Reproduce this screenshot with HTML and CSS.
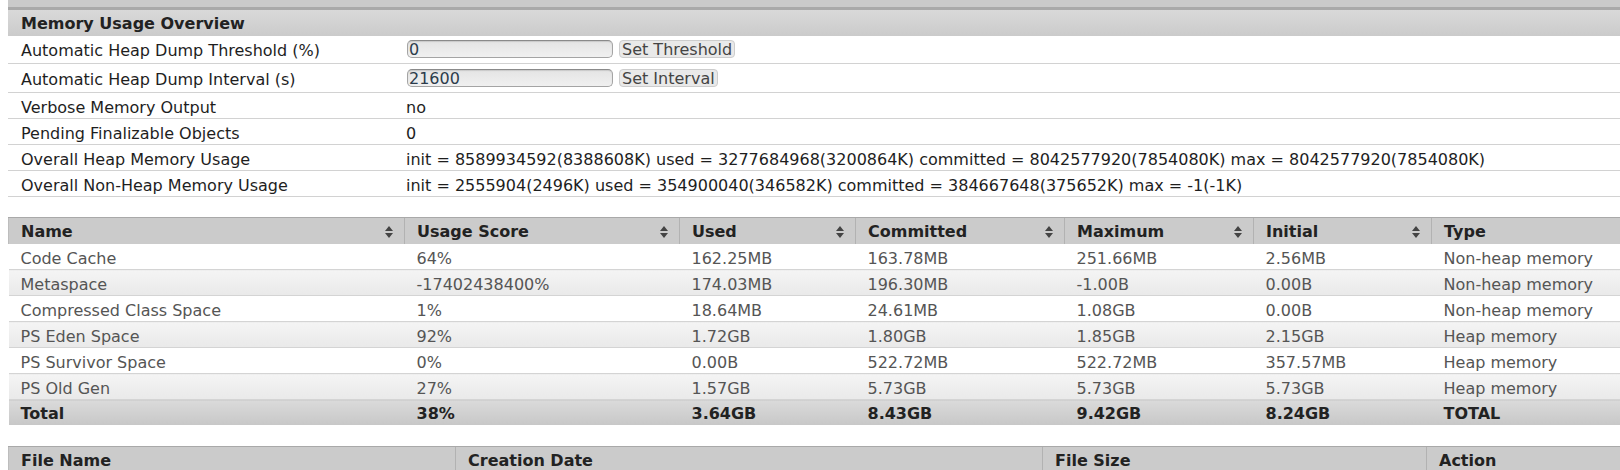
FILE: index.html
```html
<!DOCTYPE html>
<html>
<head>
<meta charset="utf-8">
<title>Memory</title>
<link rel="stylesheet" href="styles.css">
</head>
<body>
<div class="topbar"></div>
<table class="overview">
  <colgroup><col class="c-label"><col></colgroup>
  <thead><tr><th colspan="2">Memory Usage Overview</th></tr></thead>
  <tbody>
    <tr class="input-row">
      <td class="lbl">Automatic Heap Dump Threshold (%)</td>
      <td class="val"><input class="field" type="text" value="0"><button class="btn">Set Threshold</button></td>
    </tr>
    <tr class="input-row tall">
      <td class="lbl">Automatic Heap Dump Interval (s)</td>
      <td class="val"><input class="field" type="text" value="21600"><button class="btn">Set Interval</button></td>
    </tr>
    <tr><td>Verbose Memory Output</td><td>no</td></tr>
    <tr><td>Pending Finalizable Objects</td><td>0</td></tr>
    <tr><td>Overall Heap Memory Usage</td><td>init = 8589934592(8388608K) used = 3277684968(3200864K) committed = 8042577920(7854080K) max = 8042577920(7854080K)</td></tr>
    <tr><td>Overall Non-Heap Memory Usage</td><td>init = 2555904(2496K) used = 354900040(346582K) committed = 384667648(375652K) max = -1(-1K)</td></tr>
  </tbody>
</table>

<table class="grid pools">
  <colgroup>
    <col class="p1"><col class="p2"><col class="p3"><col class="p4"><col class="p5"><col class="p6"><col>
  </colgroup>
  <thead>
    <tr>
      <th><div class="hcell"><span>Name</span><svg class="sort" viewBox="0 0 8 12" width="8" height="12"><path d="M4 0L8 5H0Z M0 7H8L4 12Z"/></svg></div></th>
      <th><div class="hcell"><span>Usage Score</span><svg class="sort" viewBox="0 0 8 12" width="8" height="12"><path d="M4 0L8 5H0Z M0 7H8L4 12Z"/></svg></div></th>
      <th><div class="hcell"><span>Used</span><svg class="sort" viewBox="0 0 8 12" width="8" height="12"><path d="M4 0L8 5H0Z M0 7H8L4 12Z"/></svg></div></th>
      <th><div class="hcell"><span>Committed</span><svg class="sort" viewBox="0 0 8 12" width="8" height="12"><path d="M4 0L8 5H0Z M0 7H8L4 12Z"/></svg></div></th>
      <th><div class="hcell"><span>Maximum</span><svg class="sort" viewBox="0 0 8 12" width="8" height="12"><path d="M4 0L8 5H0Z M0 7H8L4 12Z"/></svg></div></th>
      <th><div class="hcell"><span>Initial</span><svg class="sort" viewBox="0 0 8 12" width="8" height="12"><path d="M4 0L8 5H0Z M0 7H8L4 12Z"/></svg></div></th>
      <th><div class="hcell"><span>Type</span></div></th>
    </tr>
  </thead>
  <tbody>
    <tr><td>Code Cache</td><td>64%</td><td>162.25MB</td><td>163.78MB</td><td>251.66MB</td><td>2.56MB</td><td>Non-heap memory</td></tr>
    <tr><td>Metaspace</td><td>-17402438400%</td><td>174.03MB</td><td>196.30MB</td><td>-1.00B</td><td>0.00B</td><td>Non-heap memory</td></tr>
    <tr><td>Compressed Class Space</td><td>1%</td><td>18.64MB</td><td>24.61MB</td><td>1.08GB</td><td>0.00B</td><td>Non-heap memory</td></tr>
    <tr><td>PS Eden Space</td><td>92%</td><td>1.72GB</td><td>1.80GB</td><td>1.85GB</td><td>2.15GB</td><td>Heap memory</td></tr>
    <tr><td>PS Survivor Space</td><td>0%</td><td>0.00B</td><td>522.72MB</td><td>522.72MB</td><td>357.57MB</td><td>Heap memory</td></tr>
    <tr><td>PS Old Gen</td><td>27%</td><td>1.57GB</td><td>5.73GB</td><td>5.73GB</td><td>5.73GB</td><td>Heap memory</td></tr>
  </tbody>
  <tfoot>
    <tr><td>Total</td><td>38%</td><td>3.64GB</td><td>8.43GB</td><td>9.42GB</td><td>8.24GB</td><td>TOTAL</td></tr>
  </tfoot>
</table>

<table class="grid files">
  <colgroup><col class="f1"><col class="f2"><col class="f3"><col></colgroup>
  <thead>
    <tr><th>File Name</th><th>Creation Date</th><th>File Size</th><th>Action</th></tr>
  </thead>
</table>
</body>
</html>
```

FILE: styles.css
```css
html { background: #fff; }
body {
  margin: 0 0 0 8px;
  font-family: "DejaVu Sans", Verdana, sans-serif;
  font-size: 16px;
  color: #222;
  background: #fff;
}

.topbar {
  height: 7px;
  background: #cacaca;
  border-bottom: 3px solid #a9a9a9;
}

table {
  border-collapse: collapse;
  width: 100%;
  table-layout: fixed;
}

/* overview */
.c-label { width: 382px; }
.overview th {
  height: 26px;
  padding: 0 13px;
  text-align: left;
  font-weight: bold;
  line-height: 19px;
  background: linear-gradient(#d9d9d9, #cbcbcb);
  color: #222;
}
.overview td {
  padding: 5px 12px 1px 13px;
  line-height: 19px;
  border-bottom: 1px solid #d2d2d2;
  white-space: nowrap;
  color: #1e1e1e;
}
.overview td + td { padding-left: 16px; }
.overview .input-row td.lbl {
  padding-top: 5px;
  padding-bottom: 3px;
  vertical-align: middle;
}
.overview .input-row.tall td.lbl { padding-top: 6px; padding-bottom: 3px; }
.overview .input-row td.val {
  vertical-align: top;
  padding-top: 4px;
  padding-bottom: 3px;
  padding-left: 12px;
}
.overview .input-row.tall td.val { padding-top: 5px; }

.field {
  display: inline-block;
  vertical-align: top;
  box-sizing: border-box;
  width: 206px;
  height: 18px;
  margin: 0 0 0 5px;
  padding: 0 1px;
  border: 1px solid #a4a4a4;
  border-top-color: #8a8a8a;
  border-radius: 5px;
  background: linear-gradient(#e4e4e4, #f0f0f0);
  font-family: "DejaVu Sans", Verdana, sans-serif;
  font-size: 16px;
  line-height: 16px;
  color: #2c3c4c;
  box-shadow: inset 0 1px 1px rgba(0,0,0,0.12);
}
.btn {
  display: inline-block;
  vertical-align: top;
  box-sizing: border-box;
  height: 18px;
  margin: 0 0 0 6px;
  padding: 0 2px;
  border: 1px solid #cdcdcd;
  border-radius: 4px;
  background: #e9e9e9;
  font-family: "DejaVu Sans", Verdana, sans-serif;
  font-size: 16px;
  line-height: 15px;
  color: #444;
}

/* data grids */
.grid th {
  padding: 4px 11px 3px 12px;
  line-height: 19px;
  text-align: left;
  font-weight: bold;
  color: #222;
  background: #cbcbcb;
  border-top: 1px solid #a9a9a9;
  border-left: 1px solid #b2b2b2;
  white-space: nowrap;
}
.grid th:first-child { border-left-color: #bdbdbd; }
.hcell {
  display: flex;
  align-items: center;
  justify-content: space-between;
}
.sort { fill: #444; flex: none; }

.pools { margin-top: 20px; }
.p1 { width: 396px; }
.p2 { width: 275px; }
.p3 { width: 176px; }
.p4 { width: 209px; }
.p5 { width: 189px; }
.p6 { width: 178px; }

.pools td {
  padding: 5px 12px 1px;
  line-height: 19px;
  color: #555;
  border-bottom: 1px solid #d4d4d4;
  white-space: nowrap;
  overflow: hidden;
}
.pools tbody tr:nth-child(even) td {
  background: linear-gradient(#f4f4f4, #e9e9e9);
}
.pools tfoot td {
  font-weight: bold;
  color: #222;
  background: linear-gradient(#dadada, #c7c7c7);
  border-bottom: none;
  padding-top: 4px;
  padding-bottom: 2px;
}

.files { margin-top: 21px; }
.f1 { width: 447px; }
.f2 { width: 587px; }
.f3 { width: 384px; }
```
